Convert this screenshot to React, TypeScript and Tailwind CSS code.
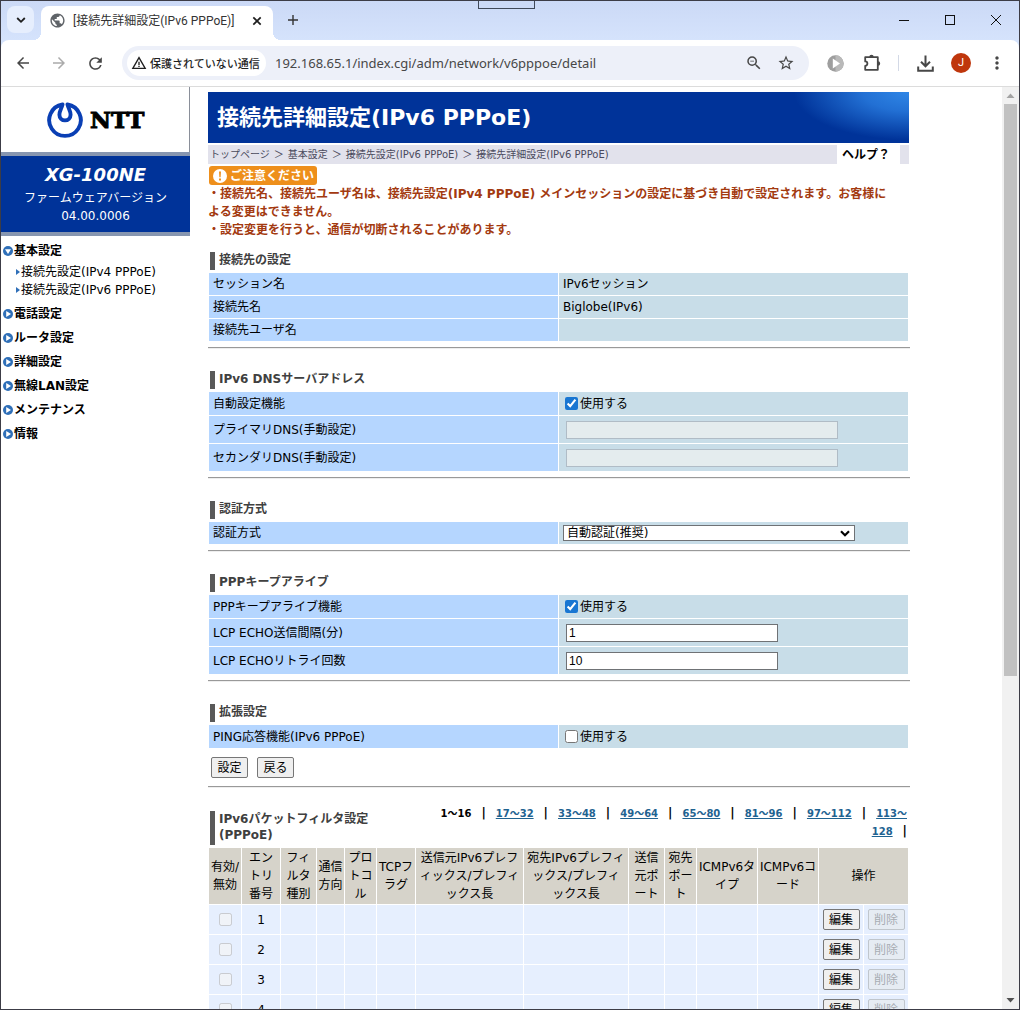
import { useState } from 'react'
import type { ReactNode } from 'react'
import clsx from 'clsx'
import {
  MdArrowBack,
  MdArrowForward,
  MdMoreVert,
  MdPublic,
  MdRefresh,
  MdStarBorder,
  MdWarningAmber,
  MdZoomOut,
} from 'react-icons/md'

const PAGE_RANGES = ['17～32', '33～48', '49～64', '65～80', '81～96', '97～112']

const FILTER_COLUMNS = [
  { label: '有効/\n無効', width: 'w-[32px]' },
  { label: 'エン\nトリ\n番号', width: 'w-[38px]' },
  { label: 'フィ\nルタ\n種別', width: 'w-[35px]' },
  { label: '通信\n方向', width: 'w-[27px]' },
  { label: 'プロ\nトコ\nル', width: 'w-[31px]' },
  { label: 'TCPフ\nラグ', width: 'w-[38px]' },
  { label: '送信元IPv6プレフ\nィックス/プレフィ\nックス長', width: 'w-[107px]' },
  { label: '宛先IPv6プレフィ\nックス/プレフィ\nックス長', width: 'w-[104px]' },
  { label: '送信\n元ポ\nート', width: 'w-[35px]' },
  { label: '宛先\nポー\nト', width: 'w-[31px]' },
  { label: 'ICMPv6タ\nイプ', width: 'w-[60px]' },
  { label: 'ICMPv6コ\nード', width: 'w-[60px]' },
]

const FILTER_ENTRIES = [1, 2, 3, 4]

const MENU = [
  { label: '基本設定', children: ['接続先設定(IPv4 PPPoE)', '接続先設定(IPv6 PPPoE)'] },
  { label: '電話設定' },
  { label: 'ルータ設定' },
  { label: '詳細設定' },
  { label: '無線LAN設定' },
  { label: 'メンテナンス' },
  { label: '情報' },
]

/* ---------- browser chrome ---------- */

const TabStrip = () => (
  <div className="flex h-[39px] shrink-0 items-end bg-linear-to-b from-[#cbd9f6] to-[#d5e3fc]">
    <button
      type="button"
      aria-label="タブを検索"
      className="mb-[7px] ml-[6px] flex h-[27px] w-[27px] items-center justify-center rounded-lg bg-[#e6eefd]"
    >
      <svg width="10" height="8" viewBox="0 0 10 8" fill="none" stroke="#1f1f1f" strokeWidth="1.8">
        <path d="M1.2 2 5 5.8 8.8 2" />
      </svg>
    </button>
    <div className="relative ml-[7px] flex h-[34px] w-[232px] items-center rounded-t-lg bg-white pr-[10px] pb-[5px] pl-[8px]">
      <span className="absolute bottom-0 -left-2 h-2 w-2 bg-[radial-gradient(circle_at_0_0,transparent_8px,white_8px)]" />
      <span className="absolute -right-2 bottom-0 h-2 w-2 bg-[radial-gradient(circle_at_100%_0,transparent_8px,white_8px)]" />
      <MdPublic className="h-[17px] w-[17px] text-[#5f6368]" />
      <span className="ml-[7px] grow font-[Roboto,'Noto_Sans_CJK_JP',sans-serif] text-[12px] leading-4 text-[#333]">
        [接続先詳細設定(IPv6 PPPoE)]
      </span>
      <button type="button" aria-label="タブを閉じる">
        <svg width="12" height="12" viewBox="0 0 12 12" stroke="#1f1f1f" strokeWidth="1.7">
          <path d="M2.3 2.3l7.4 7.4M9.7 2.3 2.3 9.7" />
        </svg>
      </button>
    </div>
    <button type="button" aria-label="新しいタブ" className="mb-[14px] ml-[14px]">
      <svg width="12" height="12" viewBox="0 0 12 12" stroke="#333" strokeWidth="1.4">
        <path d="M6 1v10M1 6h10" />
      </svg>
    </button>
    <div className="mr-[17px] mb-[14px] ml-auto flex gap-[34px]">
      <button type="button" aria-label="最小化">
        <svg width="12" height="12" viewBox="0 0 12 12" stroke="#111" shapeRendering="crispEdges">
          <path d="M1 6.5h10" />
        </svg>
      </button>
      <button type="button" aria-label="最大化">
        <svg width="12" height="12" viewBox="0 0 12 12" fill="none" stroke="#111" shapeRendering="crispEdges">
          <path d="M1.5 1.5h9v9h-9z" />
        </svg>
      </button>
      <button type="button" aria-label="閉じる">
        <svg width="12" height="12" viewBox="0 0 12 12" stroke="#111">
          <path d="M1 1l10 10M11 1 1 11" />
        </svg>
      </button>
    </div>
  </div>
)

const Toolbar = () => (
  <div className="bg-[#d5e3fc]">
    <div className="flex h-[47px] items-center rounded-t-lg border-b border-[#dcdcdc] bg-white pr-[12px] pl-[13px] text-[#474747]">
      <button type="button" aria-label="戻る">
        <MdArrowBack className="h-[18px] w-[18px]" />
      </button>
      <button type="button" aria-label="進む" className="ml-[18px] text-[#ababab]">
        <MdArrowForward className="h-[18px] w-[18px]" />
      </button>
      <button type="button" aria-label="再読み込み" className="ml-[18px]">
        <MdRefresh className="h-[19px] w-[19px]" />
      </button>
      <div className="ml-[17px] flex h-[34px] grow items-center rounded-full bg-[#edf0f9] pr-[14px] pl-[5px]">
        <span className="flex h-[26px] w-[139px] shrink-0 items-center rounded-full bg-white pl-1 text-[#1f1f1f]">
          <MdWarningAmber className="h-[16px] w-[16px] shrink-0" />
          <span className="ml-[3px] font-['Noto_Sans_CJK_JP',sans-serif] text-[11px] leading-4 font-medium whitespace-nowrap">
            保護されていない通信
          </span>
        </span>
        <input
          aria-label="アドレスバー"
          defaultValue="192.168.65.1/index.cgi/adm/network/v6pppoe/detail"
          className="ml-[9px] min-w-0 grow bg-transparent font-['Noto_Sans',sans-serif] text-[13px] leading-5 text-[#474747] outline-none"
        />
        <button type="button" aria-label="ズーム">
          <MdZoomOut className="h-[18px] w-[18px]" />
        </button>
        <button type="button" aria-label="ブックマーク" className="ml-[14px]">
          <MdStarBorder className="h-[18px] w-[18px]" />
        </button>
      </div>
      <button type="button" aria-label="再生" className="ml-[18px]">
        <svg width="17" height="17" viewBox="0 0 17 17">
          <circle cx="8.5" cy="8.5" r="8.2" fill="#9e9e9e" />
          <path d="M8.5.3a8.2 8.2 0 0 1 0 16.4z" fill="#b9b9b9" />
          <path d="M5.8 3.5 13 8.5l-7.2 5z" fill="#fff" />
        </svg>
      </button>
      <button type="button" aria-label="拡張機能" className="ml-[19px]">
        <svg width="18" height="18" viewBox="0 0 18 18" fill="currentColor">
          <path
            d="M2.200 3.200h12.600v12.600H2.200v-4a2.200 2.200 0 0 0 0-4.400z"
            fill="none"
            stroke="currentColor"
            strokeWidth="1.800"
            strokeLinejoin="round"
          />
          <path d="M6.300 3a2.200 2.200 0 0 1 4.400 0zM15 7.300a2.200 2.200 0 0 1 0 4.400z" />
        </svg>
      </button>
      <span className="ml-[17px] h-4 w-px bg-[#d3d9e6]" />
      <button type="button" aria-label="ダウンロード" className="ml-[18px]">
        <svg width="17" height="17" viewBox="0 0 17 17" fill="none" stroke="currentColor" strokeWidth="2">
          <path d="M8.5 0.5v10.5M4 6.8l4.5 4.5L13 6.8M1.2 11.5v4.3h14.6v-4.3" />
        </svg>
      </button>
      <button
        type="button"
        aria-label="プロフィール"
        className="ml-[17px] h-5 w-5 rounded-full bg-[#bf360c] text-center font-[Roboto,sans-serif] text-[11px] leading-5 text-white"
      >
        J
      </button>
      <button type="button" aria-label="メニュー" className="ml-[16px]">
        <MdMoreVert className="h-[20px] w-[20px]" />
      </button>
    </div>
  </div>
)

const Scrollbar = () => (
  <div className="flex w-[17px] shrink-0 flex-col items-center bg-[#f1f1f1]">
    <svg className="h-[17px] w-[17px] shrink-0" viewBox="0 0 17 17" fill="#a3a3a3">
      <path d="M8.5 6.5 12.5 11h-8z" />
    </svg>
    <span className="mr-px h-[62%] w-[13px] bg-[#c1c1c1]" />
    <svg className="mt-auto h-[17px] w-[17px] shrink-0" viewBox="0 0 17 17" fill="#505050">
      <path d="M8.5 10.5 12.5 6h-8z" />
    </svg>
  </div>
)

/* ---------- router side menu ---------- */

const Bullet = ({ open }: { open?: boolean }) => (
  <svg className="h-[10px] w-[10px] shrink-0" viewBox="0 0 10 10">
    <circle cx="5" cy="5" r="5" fill="#2f6fb8" />
    <path d={open ? 'M2 3.2h6L5 8z' : 'M3.2 2v6L8 5z'} fill="#fff" />
  </svg>
)

const Sidebar = () => (
  <aside className="w-[189px] shrink-0">
    <div className="flex h-[65px] items-center border-r border-[#8a8f99] pl-[45px]">
      <svg width="38" height="38" viewBox="0 0 38 38" fill="none" stroke="#0a3fb4" strokeLinecap="round">
        <path
          d="M16.500 3.500A15.800 15.800 0 1 0 21.500 3.500M16.500 3.500C15.500 7.500 13.400 10 13.400 13.800a5.600 5.600 0 0 0 11.200 0C24.600 10 22.500 7.500 21.500 3.500"
          strokeWidth="3.900"
        />
      </svg>
      <span className="ml-[6px] font-['DejaVu_Serif',serif] text-[23px] leading-6 font-bold text-black [-webkit-text-stroke:1px_black]">
        NTT
      </span>
    </div>
    <div className="border-y-4 border-[#8796b0] bg-[#003399] text-center text-[12px] leading-[18px] text-white">
      <div className="pt-[9px] pb-[4px] text-[18px] leading-5 font-bold italic">XG-100NE</div>
      <div>ファームウェアバージョン</div>
      <div className="pb-[7px]">04.00.0006</div>
    </div>
    <nav className="pt-[3px] pl-[2px]">
      {MENU.map(({ label, children }) => (
        <div key={label}>
          <a href="#" className="flex h-6 items-center gap-px font-bold">
            <Bullet open={!!children} />
            {label}
          </a>
          {children && (
            <ul className="pb-[3px]">
              {children.map((child) => (
                <li key={child}>
                  <a href="#" className="ml-[13px] flex items-center gap-px leading-[18px]">
                    <svg width="4" height="6" viewBox="0 0 4 6" fill="#2f6fb8">
                      <path d="M0 0l4 3-4 3z" />
                    </svg>
                    {child}
                  </a>
                </li>
              ))}
            </ul>
          )}
        </div>
      ))}
    </nav>
  </aside>
)

/* ---------- settings page ---------- */

const SectionTitle = ({ children }: { children: ReactNode }) => (
  <h2 className="ml-[2px] border-l-5 border-[#595959] pb-[2px] pl-1 leading-4 font-bold text-[#404040]">{children}</h2>
)

const Rule = () => <hr className="h-[2px] border-0 border-t border-[#999] bg-[#eee]" />

const Section = ({ title, first, children }: { title: string; first?: boolean; children: ReactNode }) => (
  <section className={first ? 'pt-[13px]' : 'pt-[22px]'}>
    <SectionTitle>{title}</SectionTitle>
    <table className="mt-[2px] w-full table-fixed border-separate border-spacing-px pr-px">
      <tbody>{children}</tbody>
    </table>
  </section>
)

interface RowProps {
  label: string
  htmlFor?: string
  height: 'h-[22px]' | 'h-[23px]' | 'h-[27px]'
  children?: ReactNode
}

const Row = ({ label, htmlFor, height, children }: RowProps) => (
  <tr className={height}>
    <th scope="row" className="bg-[#b5d6ff] p-0 pl-1 text-left font-normal">
      {htmlFor ? <label htmlFor={htmlFor}>{label}</label> : label}
    </th>
    <td className="bg-[#c8dde8] p-0 pl-1">{children}</td>
  </tr>
)

const CheckRow = ({ label, defaultChecked }: { label: string; defaultChecked?: boolean }) => {
  const [checked, setChecked] = useState(!!defaultChecked)
  return (
    <Row label={label} height="h-[23px]">
      <label className="ml-[2px] flex items-center gap-[2px]">
        <input
          type="checkbox"
          checked={checked}
          onChange={(e) => setChecked(e.target.checked)}
          className="h-[13px] w-[13px] accent-[#1976d2]"
        />
        使用する
      </label>
    </Row>
  )
}

const InputRow = ({ id, label, value, disabled }: { id: string; label: string; value?: string; disabled?: boolean }) => (
  <Row label={label} htmlFor={id} height="h-[27px]">
    <input
      id={id}
      type="text"
      defaultValue={value}
      disabled={disabled}
      className={clsx(
        "ml-[3px] block h-[18px] border px-[2px] font-['Liberation_Sans',sans-serif] text-[12px] leading-4",
        disabled ? 'w-[272px] border-[#b0bcc6] bg-[#e4ecee]' : 'w-[212px] border-[#6f7275] bg-white',
      )}
    />
  </Row>
)

const PushButton = ({ children, disabled }: { children: ReactNode; disabled?: boolean }) => (
  <button
    type="button"
    disabled={disabled}
    className={clsx(
      'h-[21px] w-[37px] rounded-[2px] border text-[12px] leading-[18px]',
      disabled ? 'border-[#c0c6cc] bg-[#e6ecf3] text-[#a8adb3]' : 'border-[#767676] bg-[#efefef] text-black',
    )}
  >
    {children}
  </button>
)

const PagerBar = () => <span className="mx-[10px] text-[12px] leading-none last:mr-0">|</span>

const Pager = () => (
  <div className="pb-1 text-right text-[10px] leading-[18px] font-bold">
    1～16
    {PAGE_RANGES.map((range) => (
      <span key={range} className="whitespace-nowrap">
        <PagerBar />
        <a href="#" className="text-[#1f6391] underline">
          {range}
        </a>
      </span>
    ))}
    <PagerBar />
    <a href="#" className="text-[#1f6391] underline">
      113～
      <br />
      128
    </a>
    <PagerBar />
  </div>
)

const FilterTable = () => (
  <table className="mt-[2px] w-full table-fixed border-separate border-spacing-px pr-px text-center">
    <colgroup>
      {FILTER_COLUMNS.map(({ label, width }) => (
        <col key={label} className={width} />
      ))}
      <col className="w-[44px]" />
      <col className="w-[44px]" />
    </colgroup>
    <thead>
      <tr className="h-14 bg-[#d6d3ca] leading-[18px] whitespace-pre">
        {FILTER_COLUMNS.map(({ label }) => (
          <th key={label} className="p-0 font-normal">
            {label}
          </th>
        ))}
        <th colSpan={2} className="p-0 font-normal">
          操作
        </th>
      </tr>
    </thead>
    <tbody>
      {FILTER_ENTRIES.map((n) => (
        <tr key={n} className="h-[29px] bg-[#e6effe]">
          <td className="p-0">
            <input type="checkbox" disabled aria-label={`エントリ${n}`} className="mx-auto block h-[13px] w-[13px]" />
          </td>
          <td className="p-0">{n}</td>
          {FILTER_COLUMNS.slice(2).map(({ label }) => (
            <td key={label} className="p-0" />
          ))}
          <td className="p-0">
            <PushButton>編集</PushButton>
          </td>
          <td className="p-0">
            <PushButton disabled>削除</PushButton>
          </td>
        </tr>
      ))}
    </tbody>
  </table>
)

const Notice = () => (
  <>
    <div className="mt-[2px] ml-px flex h-[19px] w-[108px] items-center gap-[3px] rounded-[3px] bg-[#ee8f1b] pl-[4px] text-[12px] font-bold text-white">
      <svg width="14" height="14" viewBox="0 0 14 14">
        <circle cx="7" cy="7" r="7" fill="#fff" />
        <path d="M6 2.500h2l-.4 5.800H6.400zM6 9.500h2v2H6z" fill="#ee8f1b" />
      </svg>
      ご注意ください
    </div>
    <p className="leading-[18px] font-bold text-[#a33a10]">
      ・接続先名、接続先ユーザ名は、接続先設定(IPv4 PPPoE) メインセッションの設定に基づき自動で設定されます。お客様に
      <br />
      よる変更はできません。
      <br />
      ・設定変更を行うと、通信が切断されることがあります。
    </p>
  </>
)

const DetailPage = () => (
  <main className="ml-[18px] w-full max-w-[702px]">
    <h1 className="mt-[5px] mr-px flex h-[51px] items-center bg-[#003399] bg-[radial-gradient(ellipse_115px_48px_at_100%_0%,#2f86e6,#2270d4_40%,transparent)] pl-[9px] text-[22px] leading-8 font-bold text-white">
      接続先詳細設定(IPv6 PPPoE)
    </h1>
    <div className="mt-[2px] mr-px flex h-[19px] items-center bg-[#e2e2ec] text-[10px] text-[#4a4a5c]">
      <div className="flex grow items-center gap-[4px] pl-[2px] whitespace-nowrap">
        <a href="#">トップページ</a>
        <span>＞</span>
        <a href="#">基本設定</a>
        <span>＞</span>
        <a href="#">接続先設定(IPv6 PPPoE)</a>
        <span>＞</span>
        <span>接続先詳細設定(IPv6 PPPoE)</span>
      </div>
      <a href="#" className="mr-[9px] w-[63px] bg-white pt-[2px] pl-[5px] text-[12px] leading-[17px] font-bold text-black">
        ヘルプ？
      </a>
    </div>
    <Notice />
    <form>
      <Section title="接続先の設定" first>
        <Row label="セッション名" height="h-[22px]">
          IPv6セッション
        </Row>
        <Row label="接続先名" height="h-[22px]">
          Biglobe(IPv6)
        </Row>
        <Row label="接続先ユーザ名" height="h-[22px]" />
      </Section>
      <div className="pt-[5px]">
        <Rule />
      </div>
      <Section title="IPv6 DNSサーバアドレス">
        <CheckRow label="自動設定機能" defaultChecked />
        <InputRow id="dns1" label="プライマリDNS(手動設定)" disabled />
        <InputRow id="dns2" label="セカンダリDNS(手動設定)" disabled />
      </Section>
      <div className="pt-[5px]">
        <Rule />
      </div>
      <Section title="認証方式">
        <Row label="認証方式" htmlFor="auth" height="h-[22px]">
          <div className="relative w-[292px]">
            <select
              id="auth"
              className="block h-[16px] w-full appearance-none border border-[#6f7275] bg-white pl-[3px] text-[12px] leading-[14px]"
            >
              <option>自動認証(推奨)</option>
            </select>
            <svg
              className="pointer-events-none absolute top-[5px] right-[5px]"
              width="10"
              height="7"
              viewBox="0 0 10 7"
              fill="none"
              stroke="#000"
              strokeWidth="2.2"
            >
              <path d="M1 1.200l4 4 4-4" />
            </svg>
          </div>
        </Row>
      </Section>
      <div className="pt-[5px]">
        <Rule />
      </div>
      <Section title="PPPキープアライブ">
        <CheckRow label="PPPキープアライブ機能" defaultChecked />
        <InputRow id="interval" label="LCP ECHO送信間隔(分)" value="1" />
        <InputRow id="retry" label="LCP ECHOリトライ回数" value="10" />
      </Section>
      <div className="pt-[5px]">
        <Rule />
      </div>
      <Section title="拡張設定">
        <CheckRow label="PING応答機能(IPv6 PPPoE)" />
      </Section>
      <div className="flex gap-[9px] pt-2 pb-2 pl-[3px]">
        <PushButton>設定</PushButton>
        <PushButton>戻る</PushButton>
      </div>
      <Rule />
      <section>
        <div className="flex items-end justify-between pt-[17px] pr-[3px]">
          <div className="w-[180px] shrink-0">
            <SectionTitle>
              IPv6パケットフィルタ設定
              <br />
              (PPPoE)
            </SectionTitle>
          </div>
          <Pager />
        </div>
        <FilterTable />
      </section>
    </form>
  </main>
)

export default function App() {
  return (
    <div className="relative flex h-screen flex-col overflow-hidden border border-[#3c3c46] bg-white">
      <span className="absolute -top-px left-[477px] h-[9px] w-[57px] border border-[#3f4858] bg-[#cbd9f6]" />
      <TabStrip />
      <Toolbar />
      <div className="flex min-h-0 grow font-['DejaVu_Sans','Noto_Sans_CJK_JP',sans-serif] text-[12px] leading-[18px] text-black">
        <div className="flex min-w-0 grow overflow-hidden">
          <Sidebar />
          <DetailPage />
        </div>
        <Scrollbar />
      </div>
    </div>
  )
}
